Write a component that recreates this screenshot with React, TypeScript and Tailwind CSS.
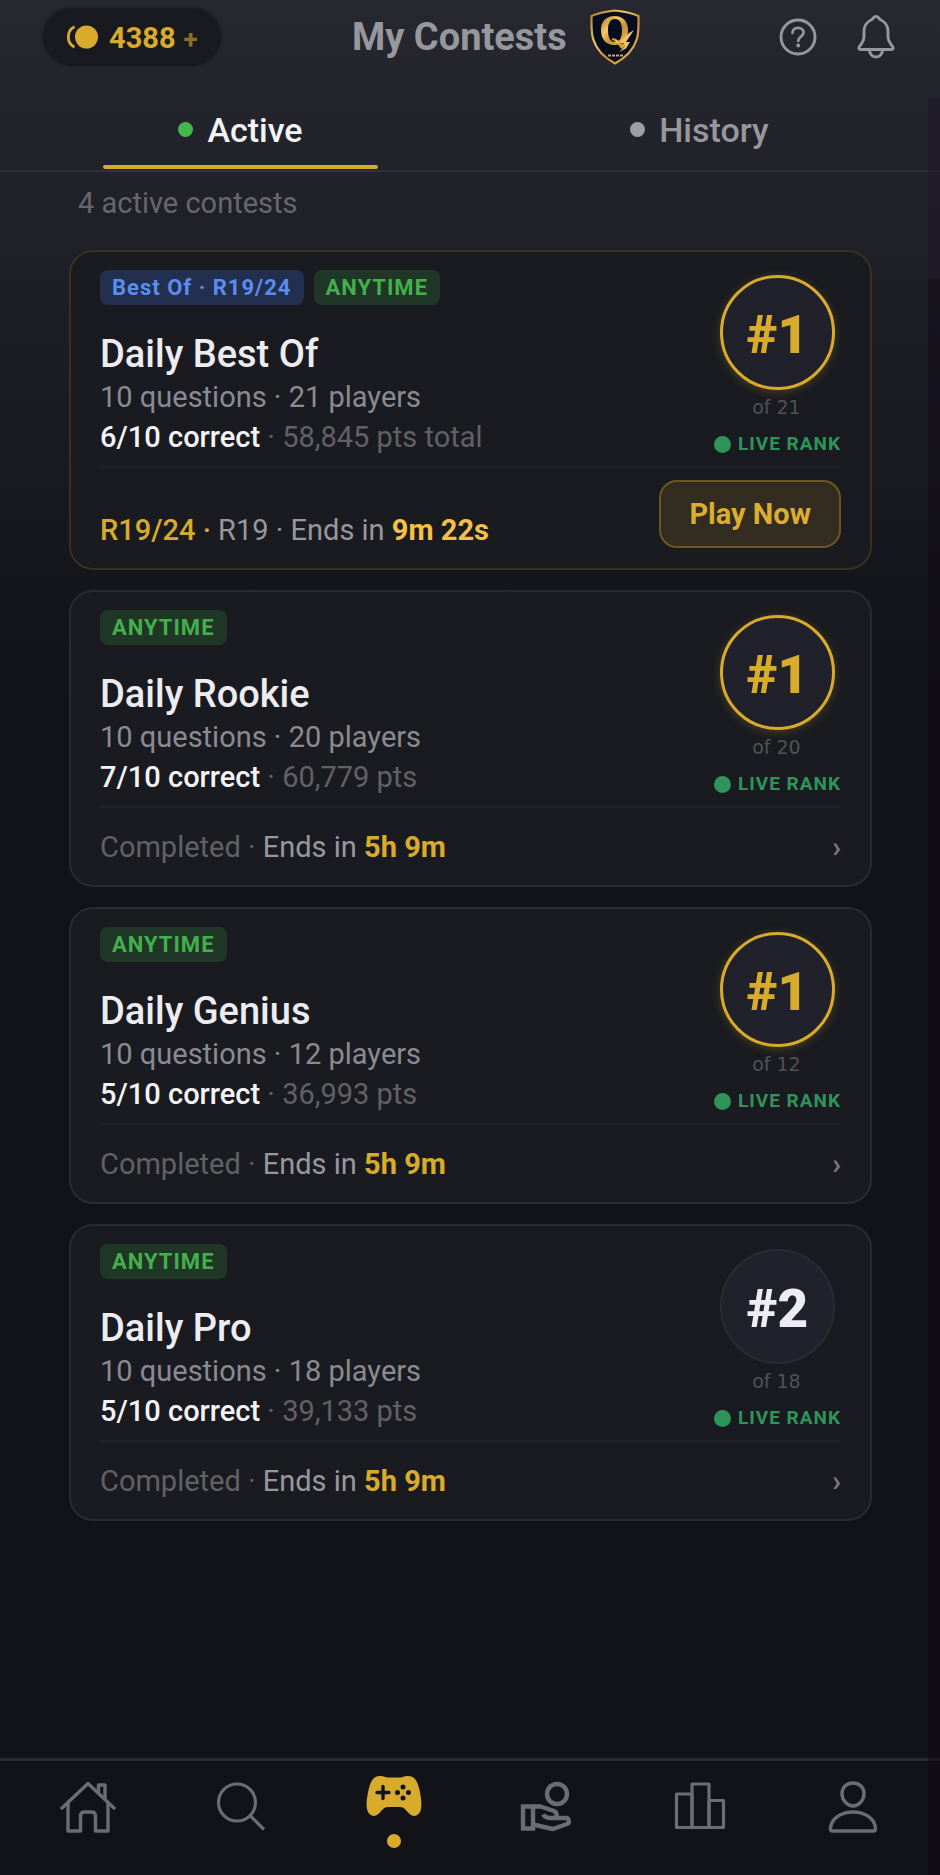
import React, { useState } from "react";

type Contest = {
  id: string;
  title: string;
  round?: string;
  questions: number;
  players: number;
  correct: number;
  points: string;
  endsIn: string;
  rank: number;
};

type TabKey = "active" | "history";

const CONTESTS: Contest[] = [
  {
    id: "best-of",
    title: "Daily Best Of",
    round: "R19/24",
    questions: 10,
    players: 21,
    correct: 6,
    points: "58,845 pts total",
    endsIn: "9m 22s",
    rank: 1,
  },
  {
    id: "rookie",
    title: "Daily Rookie",
    questions: 10,
    players: 20,
    correct: 7,
    points: "60,779 pts",
    endsIn: "5h 9m",
    rank: 1,
  },
  {
    id: "genius",
    title: "Daily Genius",
    questions: 10,
    players: 12,
    correct: 5,
    points: "36,993 pts",
    endsIn: "5h 9m",
    rank: 1,
  },
  {
    id: "pro",
    title: "Daily Pro",
    questions: 10,
    players: 18,
    correct: 5,
    points: "39,133 pts",
    endsIn: "5h 9m",
    rank: 2,
  },
];

function ShieldLogo() {
  return (
    <svg viewBox="0 0 50 56" className="h-14 w-[50px] self-start" aria-hidden="true">
      <defs>
        <linearGradient id="gold" x1="0" y1="0" x2="1" y2="1">
          <stop offset="0" stopColor="#b07a2a" />
          <stop offset="0.35" stopColor="#f3c768" />
          <stop offset="0.6" stopColor="#c98f35" />
          <stop offset="1" stopColor="#eec06a" />
        </linearGradient>
      </defs>
      <path
        d="M25 1.500C18 2.500 9 3.500 1.500 7C1.500 17 1 25 3.500 31C7 42 15 49 25 54.500C35 49 43 42 46.500 31C49 25 48.500 17 48.500 7C41 3.500 32 2.500 25 1.500Z"
        fill="#060d1e"
        stroke="url(#gold)"
        strokeWidth="2.200"
        strokeLinejoin="round"
      />
      <path
        fillRule="evenodd"
        d="M24.500 7C33 7 38 12.500 38 21C38 30 33 36 24.500 36C16 36 11 30 11 21C11 12.500 16 7 24.500 7ZM25 10C20 10 18 14.500 18 21C18 28 20 33 25 33C30 33 32 28 32 21C32 14.500 30 10 25 10Z"
        fill="url(#gold)"
      />
      <path
        d="M44 21C38 24 34 28 29 34L34 34L30 38L35 37.500L29 43L36 39.500L40 33L36 33Z"
        fill="#f0c36b"
      />
      <path d="M22 29C28 29 30 35 36 36L32 40C28 37 27 32 22 31Z" fill="url(#gold)" />
      <path d="M18 46.500h15" stroke="#d8a44c" strokeWidth="2" strokeDasharray="3 1" />
    </svg>
  );
}

function CoinsIcon() {
  return (
    <svg viewBox="0 0 32 24" className="h-6 w-8" aria-hidden="true">
      <circle cx="20.500" cy="12" r="11.500" fill="#d9ab2d" />
      <path
        d="M8.500 1.800A11.500 11.500 0 0 0 8.500 22.200"
        fill="none"
        stroke="#d9ab2d"
        strokeWidth="2.800"
      />
    </svg>
  );
}

function HelpIcon() {
  return (
    <svg viewBox="0 0 38 38" className="size-[38px]" fill="none" stroke="currentColor" aria-hidden="true">
      <circle cx="19" cy="19" r="17" strokeWidth="2.900" />
      <path
        d="M13.500 15C13.500 11.500 16 9.800 19 9.800C22.200 9.800 24.600 11.800 24.600 14.600C24.600 18.800 19.200 18.500 19.200 23"
        strokeWidth="2.700"
        strokeLinecap="round"
      />
      <circle cx="19.200" cy="27.500" r="1.900" fill="currentColor" stroke="none" />
    </svg>
  );
}

function BellIcon() {
  return (
    <svg
      viewBox="0 0 38 44"
      className="h-11 w-[38px]"
      fill="none"
      stroke="currentColor"
      strokeWidth="2.900"
      strokeLinejoin="round"
      aria-hidden="true"
    >
      <path d="M19 1.500C17 1.500 16 3 15 4.500C10 6.500 7 11 7 16.500V22C7 26.500 5 28 2.500 31.500C1.300 33.200 1.800 34.500 3.500 34.500H34.500C36.200 34.500 36.700 33.200 35.500 31.500C33 28 31 26.500 31 22V16.500C31 11 28 6.500 23 4.500C22 3 21 1.500 19 1.500Z" />
      <path d="M12.500 35C12.500 39 15.300 42 19 42C22.700 42 25.500 39 25.500 35" />
    </svg>
  );
}

function HomeIcon() {
  return (
    <svg
      viewBox="0 0 56 52"
      className="h-[52px] w-14"
      fill="none"
      stroke="currentColor"
      strokeWidth="3.400"
      strokeLinecap="round"
      strokeLinejoin="round"
      aria-hidden="true"
    >
      <path d="M2 27L28 2.500L54 27" />
      <path d="M8 22V50H20.500V35C20.500 32.500 22 31 24.500 31H31.500C34 31 35.500 32.500 35.500 35V50H48V22" />
      <path d="M38.500 11V4H45V18" />
    </svg>
  );
}

function SearchIcon() {
  return (
    <svg
      viewBox="0 0 56 52"
      className="h-[52px] w-14"
      fill="none"
      stroke="currentColor"
      strokeWidth="3.200"
      strokeLinecap="round"
      aria-hidden="true"
    >
      <circle cx="24" cy="21.500" r="18.500" />
      <path d="M37.500 35L50 47.500" />
    </svg>
  );
}

function GamepadIcon() {
  return (
    <svg viewBox="0 0 56 42" className="h-[42px] w-14" aria-hidden="true">
      <path
        d="M14 1C17 0.500 19 2.500 22 2.500H34C37 2.500 39 0.500 42 1C48 1 51 5 53 13C55 21 56 29 55 34C54 39 50 42 46 40.500C41 38.500 40 32 34 32H22C16 32 15 38.500 10 40.500C6 42 2 39 1 34C0 29 1 21 3 13C5 5 8 1 14 1Z"
        fill="#d9ab2d"
      />
      <path d="M17 11.500V23.500M11 17.500H23" stroke="#121318" strokeWidth="3.400" strokeLinecap="round" />
      <circle cx="37" cy="12" r="2.500" fill="#121318" />
      <circle cx="37" cy="23" r="2.500" fill="#121318" />
      <circle cx="31.500" cy="17.500" r="2.500" fill="#121318" />
      <circle cx="42.500" cy="17.500" r="2.500" fill="#121318" />
    </svg>
  );
}

function HandIcon() {
  return (
    <svg
      viewBox="0 0 56 52"
      className="h-[52px] w-14"
      fill="none"
      stroke="currentColor"
      strokeWidth="4.400"
      aria-hidden="true"
    >
      <circle cx="38" cy="13" r="10" />
      <path d="M4 25.500H14V47.500H4Z" />
      <path
        d="M14 25.500H21.500L35 30C37.500 31 38 33 37.500 36M24 33.500C26 37 30 37 34 37H47C50 37 51 42 48 43L34 48L14 43.500"
        strokeLinejoin="round"
      />
    </svg>
  );
}

function PodiumIcon() {
  return (
    <svg
      viewBox="0 0 56 52"
      className="h-[52px] w-14"
      fill="none"
      stroke="currentColor"
      strokeWidth="3.200"
      strokeLinejoin="round"
      aria-hidden="true"
    >
      <path d="M4.500 46.500V13H20V46.500Z" />
      <path d="M20 46.500V3H37V46.500Z" />
      <path d="M37 46.500V19.500H51.500V46.500Z" />
    </svg>
  );
}

function PersonIcon() {
  return (
    <svg
      viewBox="0 0 56 52"
      className="h-[52px] w-14"
      fill="none"
      stroke="currentColor"
      strokeWidth="3.400"
      strokeLinejoin="round"
      aria-hidden="true"
    >
      <path d="M28 2C21.500 2 17 6.500 17 12.500C17 19 22 25 28 25C34 25 39 19 39 12.500C39 6.500 34.500 2 28 2Z" />
      <path d="M5.500 47C6.500 37.500 16 31 28 31C40 31 49.500 37.500 50.500 47C50.700 49 50 50 48.500 50H7.500C6 50 5.300 49 5.500 47Z" />
    </svg>
  );
}

const NAV_ITEMS = [
  { label: "Home", Icon: HomeIcon, active: false },
  { label: "Search", Icon: SearchIcon, active: false },
  { label: "Contests", Icon: GamepadIcon, active: true },
  { label: "Rewards", Icon: HandIcon, active: false },
  { label: "Leaderboard", Icon: PodiumIcon, active: false },
  { label: "Profile", Icon: PersonIcon, active: false },
];

function Tab({
  label,
  selected,
  onSelect,
}: {
  label: string;
  selected: boolean;
  onSelect: () => void;
}) {
  return (
    <button
      role="tab"
      aria-selected={selected}
      onClick={onSelect}
      className={`flex flex-1 flex-col items-center justify-end text-[34px] leading-[40px] font-medium ${
        selected ? "text-[#f4f4f8]" : "text-[#97989e]"
      }`}
    >
      <span className="flex items-center gap-[14px]">
        <span
          className={`mb-[2px] size-[15px] rounded-full ${
            selected ? "bg-[#43b74b]" : "bg-[#9aa0a6]"
          }`}
        />
        {label}
      </span>
      <span
        className={`mt-[15px] h-1 w-3/5 rounded-full ${
          selected ? "bg-[#d9ab2d]" : "bg-transparent"
        }`}
      />
    </button>
  );
}

function RankBadge({ rank, players }: { rank: number; players: number }) {
  const first = rank === 1;

  return (
    <div className="flex flex-col items-center pt-[5px]">
      <div
        className={`flex size-[115px] items-center justify-center rounded-full bg-[#20212a] pt-1 text-[53px] leading-[60px] font-black ${
          first
            ? "border-[3px] border-[#d9ab2d] text-[#d9ab2d] shadow-[0_2px_10px_rgba(217,171,45,0.25)]"
            : "border-2 border-[#2b2c32] text-[#ececf2]"
        }`}
      >
        #{rank}
      </div>
      <div className="mt-[3px] pr-[2px] font-['DejaVu_Sans',sans-serif] text-[19px] leading-[28px] text-[#505157]">
        of {players}
      </div>
      <div className="mt-[9px] flex items-center gap-[7px] text-[19px] leading-[28px] font-bold tracking-[1px] text-[#2f945a]">
        <span className="size-[17px] rounded-full bg-[#2f945a]" />
        LIVE RANK
      </div>
    </div>
  );
}

function ContestCard({ contest }: { contest: Contest }) {
  const { round } = contest;

  return (
    <article
      className={`rounded-[24px] border-2 bg-[#1a1b20] px-[29px] pt-[18px] pb-5 ${
        round ? "border-[#37311f]" : "border-[#2a2b30]"
      }`}
    >
      <div className="flex justify-between">
        <div>
          <div className="flex gap-[10px] text-[22px] leading-[35px] font-bold tracking-[1px]">
            {round && (
              <span className="rounded-[8px] bg-[#222f4e] px-3 text-[#5b8def]">
                Best Of · {round}
              </span>
            )}
            <span className="rounded-[8px] bg-[#203627] px-3 text-[#43b04c]">ANYTIME</span>
          </div>
          <h2 className="mt-[26px] text-[38px] leading-[46px] font-medium text-[#ececf2]">
            {contest.title}
          </h2>
          <p className="text-[29px] leading-[40px] text-[#8a8b91]">
            {contest.questions} questions · {contest.players} players
          </p>
          <p className="text-[29px] leading-[40px] text-[#606167]">
            <span className="font-medium text-[#f4f4f8]">
              {contest.correct}/{contest.questions} correct
            </span>{" "}
            · {contest.points}
          </p>
        </div>
        <RankBadge rank={contest.rank} players={contest.players} />
      </div>

      {round ? (
        <div className="mt-2 flex items-end justify-between border-t-2 border-[#222328] pt-3">
          <p className="text-[29px] leading-[36px] text-[#97989e]">
            <span className="font-medium text-[#d9ab2d]">{round} ·</span> R19 · Ends in{" "}
            <strong className="font-bold text-[#f5c04a]">{contest.endsIn}</strong>
          </p>
          <button className="h-[68px] rounded-[18px] border-2 border-[#6b5624] bg-[#332c20] px-7 text-[29px] leading-[36px] font-bold text-[#dcae30]">
            Play Now
          </button>
        </div>
      ) : (
        <div className="mt-2 flex items-end justify-between border-t-2 border-[#222328] pt-[21px]">
          <p className="text-[29px] leading-[36px] text-[#606167]">
            Completed · <span className="text-[#97989e]">Ends in</span>{" "}
            <strong className="font-bold text-[#d9ab2d]">{contest.endsIn}</strong>
          </p>
          <button
            aria-label={`Open ${contest.title}`}
            className="text-[29px] leading-[36px] font-bold text-[#76777d]"
          >
            ›
          </button>
        </div>
      )}
    </article>
  );
}

export default function App() {
  const [tab, setTab] = useState<TabKey>("active");

  return (
    <div className="relative flex min-h-screen flex-col bg-[#121318] bg-linear-to-b from-[#27282f] from-0% via-[#121318] via-[700px] to-[#121318] font-[Roboto,sans-serif]">
      <header className="flex items-center justify-between pt-[6px] pr-[45px] pl-[41px]">
        <button className="flex h-[62px] items-center gap-[11px] rounded-full border-2 border-[#222329] bg-[#191a1f] px-[23px] text-[29px] font-bold text-[#d9ab2d]">
          <CoinsIcon />
          <span className="pt-[3px]">
            4388<span className="pl-2 text-[26px] text-[#8a7226]">+</span>
          </span>
        </button>
        <div className="flex items-center gap-[23px] pr-[10px]">
          <h1 className="text-[38px] leading-[44px] font-bold text-[#97989e]">My Contests</h1>
          <ShieldLogo />
        </div>
        <div className="flex items-center gap-10 text-[#97989e]">
          <button aria-label="Help">
            <HelpIcon />
          </button>
          <button aria-label="Notifications">
            <BellIcon />
          </button>
        </div>
      </header>

      <div role="tablist" className="mt-[42px] flex border-b-2 border-[#303137] px-[11px] pb-px">
        <Tab label="Active" selected={tab === "active"} onSelect={() => setTab("active")} />
        <Tab label="History" selected={tab === "history"} onSelect={() => setTab("history")} />
      </div>

      <main className="flex-1 pr-[68px] pl-[69px]">
        <p className="mt-[11px] pl-[9px] text-[29px] leading-[40px] text-[#66676d]">
          {CONTESTS.length} active contests
        </p>
        <div className="mt-[27px] flex flex-col gap-5">
          {CONTESTS.map((c) => (
            <ContestCard key={c.id} contest={c} />
          ))}
        </div>
      </main>

      <nav className="flex h-[117px] border-t-[3px] border-[#2a2b30] bg-[#121318] px-[11px]">
        {NAV_ITEMS.map(({ label, Icon, active }) => (
          <a
            key={label}
            href="#"
            aria-label={label}
            className={`flex flex-1 flex-col items-center text-[#6c6d73] ${
              active ? "pt-[14px]" : "pt-5"
            }`}
          >
            <Icon />
            {active && <span className="mt-[17px] size-[14px] rounded-full bg-[#d9ab2d]" />}
          </a>
        ))}
      </nav>

      {/* dark edge of the screen */}
      <div className="pointer-events-none absolute top-[98px] right-0 bottom-0 flex w-3 flex-col">
        <div className="h-[181px] bg-[#1e1728]/60" />
        <div className="flex-1 bg-[#0d0716]/50" />
      </div>
    </div>
  );
}
